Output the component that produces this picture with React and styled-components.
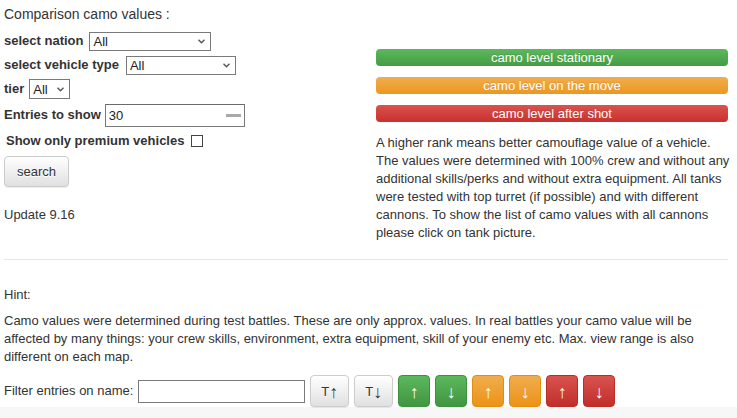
import React from "react";
import styled, { createGlobalStyle, css } from "styled-components";

const GlobalStyle = createGlobalStyle`
  html, body { margin: 0; padding: 0; background: #fff; }
  body {
    font-family: "Liberation Sans", Arial, sans-serif;
    font-size: 13px;
    line-height: 18px;
    color: #333;
  }
  * { box-sizing: border-box; }
`;

const Page = styled.div`
  width: 737px;
  padding: 0 9px 0 4px;
`;

const Top = styled.div`
  display: grid;
  grid-template-columns: 372px 352px;
`;

const LeftCol = styled.div`
  display: flex;
  flex-direction: column;
  align-items: flex-start;
  padding-top: 5px;
`;

const Title = styled.div`
  height: 18px;
  font-size: 14px;
  margin-bottom: 6px;
`;

const FieldRow = styled.div`
  display: flex;
  align-items: center;
  gap: ${(p) => p.$gap || 6}px;
  height: ${(p) => p.$h || 24}px;
`;

const Label = styled.span`
  font-weight: bold;
  white-space: nowrap;
  padding-left: ${(p) => p.$indent || 0}px;
`;

const SelectWrap = styled.span`
  position: relative;
  display: inline-flex;
  width: ${(p) => p.$w}px;
  height: ${(p) => p.$h || 19}px;
`;

const Select = styled.select`
  appearance: none;
  -webkit-appearance: none;
  width: 100%;
  height: 100%;
  margin: 0;
  padding: 0 16px 0 3px;
  border: 1px solid #7a7a7a;
  border-radius: 0;
  background: #fff;
  font-family: "Liberation Sans", Arial, sans-serif;
  font-size: 13px;
  color: #222;
  outline: none;
`;

const Chevron = styled.svg`
  position: absolute;
  right: 6px;
  top: 50%;
  margin-top: -2px;
  width: 7px;
  height: 5px;
  pointer-events: none;
`;

const NumberWrap = styled.span`
  position: relative;
  display: inline-flex;
  width: 140px;
  height: 23px;
`;

const NumberInput = styled.input`
  width: 100%;
  height: 100%;
  margin: 0;
  padding: 0 3px;
  border: 1px solid #7a7a7a;
  border-top-color: #6a6a6a;
  border-radius: 0;
  font-family: "Liberation Sans", Arial, sans-serif;
  font-size: 13px;
  color: #222;
  outline: none;
`;

const SpinMark = styled.span`
  position: absolute;
  right: 4px;
  top: 10px;
  width: 15px;
  height: 3px;
  background: #a9a9a9;
  pointer-events: none;
`;

const Check = styled.input`
  appearance: none;
  -webkit-appearance: none;
  width: 12px;
  height: 12px;
  margin: 0;
  border: 1px solid #444;
  background: #fff;
  border-radius: 0;
`;

const btnBase = css`
  display: inline-flex;
  align-items: center;
  justify-content: center;
  height: ${(p) => p.$h || 32}px;
  width: ${(p) => p.$w}px;
  padding: 0;
  border-radius: 4px;
  font-family: "Liberation Sans", Arial, sans-serif;
  font-size: 13px;
  cursor: pointer;
`;

const tones = {
  default: css`
    background: linear-gradient(#fff, #e0e0e0);
    border: 1px solid #ccc;
    color: #333;
    text-shadow: 0 1px 0 #fff;
    box-shadow: inset 0 1px 0 rgba(255,255,255,.15), 0 1px 1px rgba(0,0,0,.075);
  `,
  green: css`
    background: linear-gradient(#5cb85c, #419641);
    border: 1px solid #3e8f3e;
    color: #fff;
  `,
  orange: css`
    background: linear-gradient(#f0ad4e, #eb9316);
    border: 1px solid #e38d13;
    color: #fff;
  `,
  red: css`
    background: linear-gradient(#d9534f, #c12e2a);
    border: 1px solid #b92c28;
    color: #fff;
  `,
};

const Button = styled.button`
  ${btnBase}
  ${(p) => tones[p.$tone || "default"]}
`;

const SearchButton = styled(Button)`
  margin-top: 3px;
`;

const Note = styled.div`
  margin-top: 19px;
  height: 18px;
`;

const RightCol = styled.div`
  padding-top: 49px;
  display: flex;
  flex-direction: column;
`;

const Bars = styled.div`
  display: flex;
  flex-direction: column;
  gap: 11px;
`;

const barTones = {
  green: "linear-gradient(#5cb85c, #449d44)",
  orange: "linear-gradient(#f0ad4e, #ec971f)",
  red: "linear-gradient(#d9534f, #c9302c)",
};

const Bar = styled.div`
  height: 17px;
  line-height: 17px;
  border-radius: 4px;
  text-align: center;
  color: #fff;
  background: ${(p) => barTones[p.$tone]};
  text-shadow: 0 -1px 0 rgba(0,0,0,.1);
`;

const Info = styled.p`
  margin: 12px -6px 0 0;
  line-height: 18px;
`;

const Rule = styled.hr`
  margin: 17px 0 0;
  border: 0;
  border-top: 1px solid #e6e6e6;
  height: 0;
`;

const HintTitle = styled.div`
  margin-top: 26px;
  height: 18px;
`;

const HintText = styled.p`
  margin: 8px 0 0;
  line-height: 18px;
`;

const FilterRow = styled.div`
  display: flex;
  align-items: center;
  gap: 5px;
  height: 32px;
  margin-top: 9px;
`;

const FilterInput = styled.input`
  width: 167px;
  height: 23px;
  margin: 0;
  padding: 0 3px;
  border: 1px solid #7a7a7a;
  border-radius: 0;
  font-family: "Liberation Sans", Arial, sans-serif;
  font-size: 13px;
  outline: none;
`;

const Arrow = styled.span`
  font-family: "Liberation Sans", "DejaVu Sans", sans-serif;
  font-size: 18px;
  line-height: 1;
  margin-top: 2px;
`;

const Footer = styled.div`
  height: 40px;
  background: #f7f7f7;
`;

function SelectField({ w, h, options }) {
  return (
    <SelectWrap $w={w} $h={h}>
      <Select defaultValue={options[0]}>
        {options.map((o) => (
          <option key={o}>{o}</option>
        ))}
      </Select>
      <Chevron viewBox="0 0 7 5">
        <path d="M0.5 0.8 L3.5 3.8 L6.5 0.8" fill="none" stroke="#555" strokeWidth="1.4" />
      </Chevron>
    </SelectWrap>
  );
}

export default function App() {
  return (
    <>
      <GlobalStyle />
      <Page>
        <Top>
          <LeftCol>
            <Title>Comparison camo values :</Title>
            <FieldRow>
              <Label>select nation</Label>
              <SelectField w={122} options={["All"]} />
            </FieldRow>
            <FieldRow $gap={7}>
              <Label>select vehicle type</Label>
              <SelectField w={110} options={["All"]} />
            </FieldRow>
            <FieldRow $gap={5}>
              <Label>tier</Label>
              <SelectField w={41} h={20} options={["All"]} />
            </FieldRow>
            <FieldRow $h={28} $gap={4}>
              <Label>Entries to show</Label>
              <NumberWrap>
                <NumberInput type="text" defaultValue="30" />
                <SpinMark />
              </NumberWrap>
            </FieldRow>
            <FieldRow $gap={7}>
              <Label $indent={2}>Show only premium vehicles</Label>
              <Check type="checkbox" />
            </FieldRow>
            <SearchButton $w={65} $h={31}>search</SearchButton>
            <Note>Update 9.16</Note>
          </LeftCol>
          <RightCol>
            <Bars>
              <Bar $tone="green">camo level stationary</Bar>
              <Bar $tone="orange">camo level on the move</Bar>
              <Bar $tone="red">camo level after shot</Bar>
            </Bars>
            <Info>
              A higher rank means better camouflage value of a vehicle. The values were
              determined with 100% crew and without any additional skills/perks and without
              extra equipment. All tanks were tested with top turret (if possible) and with
              different cannons. To show the list of camo values with all cannons please
              click on tank picture.
            </Info>
          </RightCol>
        </Top>
        <Rule />
        <HintTitle>Hint:</HintTitle>
        <HintText>
          Camo values were determined during test battles. These are only approx. values. In
          real battles your camo value will be affected by many things: your crew skills,
          environment, extra equipment, skill of your enemy etc. Max. view range is also
          different on each map.
        </HintText>
        <FilterRow>
          <span>Filter entries on name:</span>
          <FilterInput type="text" />
          <Button $w={39}>T<Arrow>↑</Arrow></Button>
          <Button $w={39}>T<Arrow>↓</Arrow></Button>
          <Button $w={32} $tone="green"><Arrow>↑</Arrow></Button>
          <Button $w={32} $tone="green"><Arrow>↓</Arrow></Button>
          <Button $w={32} $tone="orange"><Arrow>↑</Arrow></Button>
          <Button $w={32} $tone="orange"><Arrow>↓</Arrow></Button>
          <Button $w={32} $tone="red"><Arrow>↑</Arrow></Button>
          <Button $w={32} $tone="red"><Arrow>↓</Arrow></Button>
        </FilterRow>
      </Page>
      <Footer />
    </>
  );
}
